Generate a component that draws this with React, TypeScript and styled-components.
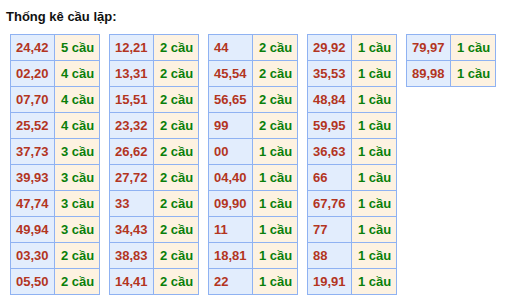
import React from 'react';
import styled, { createGlobalStyle } from 'styled-components';

const GlobalStyle = createGlobalStyle`
  body {
    margin: 0;
    background: #ffffff;
    font-family: Arial, "Liberation Sans", sans-serif;
  }
`;

const Page = styled.div`
  padding: 8px 0 0 6px;
`;

const Title = styled.h3`
  margin: 0;
  font-size: 13px;
  line-height: 18px;
  font-weight: bold;
  color: #111;
`;

const Tables = styled.div`
  display: flex;
  align-items: flex-start;
  gap: 9px;
  margin-top: 8px;
  padding-left: 4px;
`;

const Grid = styled.div`
  display: grid;
  grid-template-columns: 43px 44px;
  grid-auto-rows: 25px;
  gap: 1px;
  padding: 1px;
  background: #8fb2f2;
`;

const Cell = styled.div<{ $kind: 'num' | 'count' }>`
  display: flex;
  align-items: center;
  padding: 0 0 0 ${(p) => (p.$kind === 'num' ? '5px' : '6px')};
  font-size: 13px;
  font-weight: bold;
  white-space: nowrap;
  background: ${(p) => (p.$kind === 'num' ? '#e2edfd' : '#fdf2e1')};
  color: ${(p) => (p.$kind === 'num' ? '#b3351f' : '#0a7f0a')};
`;

type Row = [string, number];

const columns: Row[][] = [
  [['24,42', 5], ['02,20', 4], ['07,70', 4], ['25,52', 4], ['37,73', 3], ['39,93', 3], ['47,74', 3], ['49,94', 3], ['03,30', 2], ['05,50', 2]],
  [['12,21', 2], ['13,31', 2], ['15,51', 2], ['23,32', 2], ['26,62', 2], ['27,72', 2], ['33', 2], ['34,43', 2], ['38,83', 2], ['14,41', 2]],
  [['44', 2], ['45,54', 2], ['56,65', 2], ['99', 2], ['00', 1], ['04,40', 1], ['09,90', 1], ['11', 1], ['18,81', 1], ['22', 1]],
  [['29,92', 1], ['35,53', 1], ['48,84', 1], ['59,95', 1], ['36,63', 1], ['66', 1], ['67,76', 1], ['77', 1], ['88', 1], ['19,91', 1]],
  [['79,97', 1], ['89,98', 1]],
];

function App() {
  return (
    <Page>
      <GlobalStyle />
      <Title>Thống kê cầu lặp:</Title>
      <Tables>
        {columns.map((rows, i) => (
          <Grid key={i}>
            {rows.map(([pair, count]) => (
              <React.Fragment key={pair}>
                <Cell $kind="num">{pair}</Cell>
                <Cell $kind="count">{count} cầu</Cell>
              </React.Fragment>
            ))}
          </Grid>
        ))}
      </Tables>
    </Page>
  );
}

export default App;
